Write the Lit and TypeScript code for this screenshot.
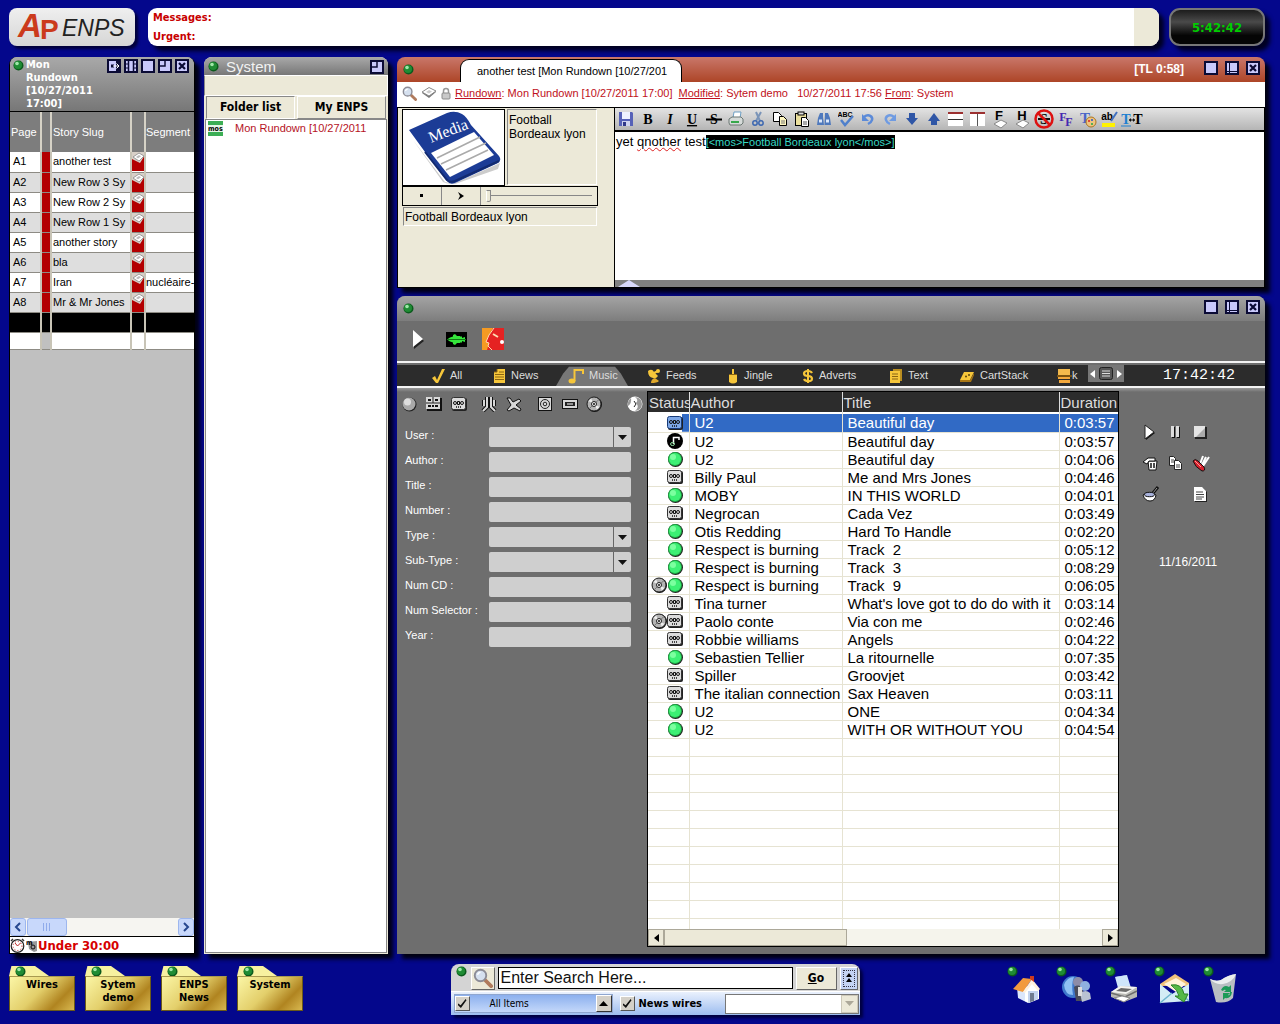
import { LitElement, html, css, svg, nothing, TemplateResult } from "lit";
import { customElement, state } from "lit/decorators.js";
import { classMap } from "lit/directives/class-map.js";

const icon = (w: number, h: number, body: unknown) =>
  html`<svg class="ic" width=${w} height=${h} viewBox="0 0 ${w} ${h}" aria-hidden="true">${body}</svg>`;

const orb = () =>
  icon(11, 11, svg`<circle cx="5.5" cy="5.5" r="5" fill="#0b5a1c"/><circle cx="5" cy="5" r="4" fill="#1f8c34"/><circle cx="4" cy="3.5" r="1.8" fill="#9fe6a8"/>`);

/* Window title-bar glyphs */
const box = (body: unknown) =>
  icon(14, 14, svg`<rect x="1" y="1" width="12" height="12" fill="#c9c9fb" stroke="#0b0b35" stroke-width="2"/>${body}`);
const win = {
  send: () => box(svg`<path d="M9 2h4v10H9z" fill="#0b0b35"/><path d="M4 7h3" stroke="#0b0b35" stroke-width="3"/><path d="M6 7h6M9.500 4.500L12 7 9.500 9.500" stroke="#fff" fill="none"/>`),
  film: () => box(svg`<path d="M4.500 1v12M9.500 1v12" stroke="#0b0b35" stroke-width="1.5"/><path d="M1 5h3M1 9h3M10 5h3M10 9h3" stroke="#0b0b35"/>`),
  full: () => box(nothing),
  corner: () => box(svg`<path d="M7 2v5H2" stroke="#0b0b35" stroke-width="1.5" fill="none"/>`),
  side: () => box(svg`<path d="M4.500 2v10M2 10.500h10" stroke="#0b0b35" fill="none"/>`),
  close: () => box(svg`<path d="M4 4l6 6M10 4l-6 6" stroke="#0b0b35" stroke-width="2.2"/>`),
};

const lens = (n: number) =>
  html`<svg class="ic" width=${n} height=${n} viewBox="0 0 16 16" aria-hidden="true"><path d="M9 9l5.500 5.500" stroke="#b07a5c" stroke-width="3" stroke-linecap="round"/><circle cx="6" cy="6" r="4.6" fill="#d5e0ef" stroke="#8c8c96" stroke-width="1.5"/><path d="M3.600 5.400A3 3 0 0 1 6 3.400" stroke="#fff" stroke-width="1.3" fill="none"/></svg>`;
const layers = () =>
  icon(16, 12, svg`<path d="M1 6l7-5 7 4-7 6z" fill="#777"/><path d="M1 5l7-4.500 7 3.500-7 5z" fill="#fff" stroke="#888"/><path d="M5 5l3-2 3 1.500-3 2z" fill="#ccc"/>`);
const lock = () =>
  icon(10, 13, svg`<path d="M2.500 6V4a2.500 2.500 0 0 1 5 0v2" fill="none" stroke="#999" stroke-width="1.500"/><rect x="1" y="6" width="8" height="6" rx="1" fill="#c9c9c9" stroke="#8a8a8a"/>`);
const caption = () =>
  icon(13, 19, svg`<rect width="13" height="19" fill="#b30000"/><path d="M0 0h13v3L8 11 0 7z" fill="#d8d0c8"/><path d="M1 5l6-4 5 3-5 5z" fill="#fff" stroke="#888" stroke-width=".8"/><path d="M4 5l3-2 2 1.300-3 2z" fill="#bbb"/>`);

/* Status column glyphs */
const ball = () =>
  icon(16, 16, svg`<circle cx="8.500" cy="8.500" r="7.500" fill="#222"/><circle cx="8" cy="8" r="7" fill="#1faa45"/><circle cx="8" cy="8" r="6" fill="#3df074"/><circle cx="6" cy="6" r="3" fill="#7cff9f"/>`);
const tape = (blue = false) =>
  icon(16, 14, svg`<rect x="1" y="1" width="15" height="13" rx="2" fill="#222"/><rect x=".5" y=".5" width="14" height="12" rx="2" fill=${blue ? "#7da7e6" : "#dcdcdc"} stroke=${blue ? "#173a78" : "#333"}/><circle cx="4" cy="6" r="1.500" fill="none" stroke="#111"/><circle cx="11" cy="6" r="1.500" fill="none" stroke="#111"/><path d="M6.500 4.500h2v3h-2z" fill="none" stroke="#111"/><path d="M5 10h1M7 10h1M9 10h1" stroke="#111" stroke-width="1.500"/>`);
const note = () =>
  icon(16, 16, svg`<circle cx="8" cy="8" r="8" fill="#000"/><path d="M6.500 11V4.500H12V7" fill="none" stroke="#fff" stroke-width="1.500"/><ellipse cx="5.500" cy="11" rx="2" ry="1.500" fill="none" stroke="#8fe0a0"/>`);
const disc = () =>
  icon(16, 16, svg`<circle cx="8.500" cy="8.500" r="7.500" fill="#111"/><circle cx="8" cy="8" r="7" fill="#b4b4b4" stroke="#222"/><path d="M8 8L2.500 5 5 2.500zM8 8l5.500 3-2.500 2.500z" fill="#eee"/><path d="M8 8l5-4.500M8 8l-5 5" stroke="#777"/><circle cx="8" cy="8" r="2.500" fill="#eee" stroke="#222"/><circle cx="8" cy="8" r="1" fill="#111"/>`);

/* Editor toolbar */
const letter = (t: string, style: string) => svg`<text x="8" y="13" text-anchor="middle" class=${style}>${t}</text>`;
const tools: [string, TemplateResult][] = [
  ["Save", icon(16, 16, svg`<path d="M1 1h13l1 1v13H1z" fill="#5661b8"/><rect x="4" y="1" width="8" height="7" fill="#eef2ff"/><rect x="4" y="10" width="8" height="5" fill="#cfd3ef"/><rect x="5" y="11" width="3" height="4" fill="#30388a"/>`)],
  ["Bold", icon(16, 16, letter("B", "tb"))],
  ["Italic", icon(16, 16, letter("I", "ti"))],
  ["Underline", icon(16, 16, letter("U", "tu"))],
  ["Strike", icon(16, 16, svg`${letter("S", "tb")}<path d="M0 8.500h16" stroke="#000" stroke-width="2"/>`)],
  ["Print", icon(16, 16, svg`<path d="M5 7l1-6h7l-1 6z" fill="#fff" stroke="#6d9fc4"/><path d="M1 8l3-2h9l2 2v4l-2 2H2l-1-2z" fill="#d6dbd9" stroke="#6b7773"/><path d="M3 11h8" stroke="#37a84b" stroke-width="2"/>`)],
  ["Cut", icon(16, 16, svg`<path d="M6 1l4 9M11 1L6 10" stroke="#7a94b8" stroke-width="2"/><circle cx="5" cy="12" r="2.200" fill="none" stroke="#3c67b0" stroke-width="1.500"/><circle cx="11" cy="12" r="2.200" fill="none" stroke="#3c67b0" stroke-width="1.500"/>`)],
  ["Copy", icon(16, 16, svg`<path d="M1.500 1.500h5l3 3v6h-8z" fill="#fff" stroke="#000"/><path d="M7.500 5.500h4l3 3v6h-7z" fill="#fdf6c0" stroke="#000"/><path d="M9 10h4M9 12h4" stroke="#777"/>`)],
  ["Paste", icon(16, 16, svg`<rect x="1.500" y="2.500" width="11" height="12" fill="#eadf9d" stroke="#000"/><rect x="4" y="1" width="6" height="3" fill="#ddd" stroke="#000"/><path d="M7.500 6.500h4l3 3v6h-7z" fill="#fff" stroke="#000"/><path d="M9 11h4M9 13h4" stroke="#555"/>`)],
  ["Find", icon(16, 16, svg`<path d="M4 2h3v4l1 8H1l1-7zM9 2h3l2 5 1 7H8.500z" fill="#4f79bd"/><path d="M3 10h3M10 10h3" stroke="#dce8fa" stroke-width="3"/>`)],
  ["Spelling", icon(16, 16, svg`<text x="7" y="6" text-anchor="middle" class="tabc">ABC</text><path d="M3 9l4 5 8-9" fill="none" stroke="#4f80cc" stroke-width="2.500"/>`)],
  ["Undo", icon(16, 16, svg`<path d="M4 6c5-4 9 0 8 3-.5 2-2 3-4 4" fill="none" stroke="#5b8ad8" stroke-width="2.500"/><path d="M2 3v7h7z" fill="#5b8ad8"/>`)],
  ["Redo", icon(16, 16, svg`<path d="M12 6c-5-4-9 0-8 3 .5 2 2 3 4 4" fill="none" stroke="#6f9be2" stroke-width="2.500"/><path d="M14 3v7H7z" fill="#6f9be2"/>`)],
  ["Move down", icon(16, 16, svg`<path d="M5 2h6v5h3l-6 7-6-7h3z" fill="#2f56a6"/>`)],
  ["Move up", icon(16, 16, svg`<path d="M8 2l6 8h-3v4H5v-4H2z" fill="#2f56a6"/>`)],
  ["Rows", icon(16, 16, svg`<rect width="15" height="14" y="1" fill="#fff"/><path d="M0 2h15" stroke="#9c3030" stroke-width="2"/><path d="M0 8.500h15" stroke="#333"/>`)],
  ["Columns", icon(16, 16, svg`<rect width="15" height="14" y="1" fill="#fff"/><path d="M0 2h15" stroke="#9c3030" stroke-width="2"/><path d="M7.500 3v12" stroke="#555"/>`)],
  ["Footer", icon(18, 20, svg`<path d="M3 15l7-4 6 3-6 5z" fill="#fff" stroke="#888"/><text x="8" y="11" text-anchor="middle" class="tcap">F</text>`)],
  ["Header", icon(18, 20, svg`<path d="M3 15l7-4 6 3-6 5z" fill="#fff" stroke="#888"/><text x="9" y="11" text-anchor="middle" class="tcap">H</text>`)],
  ["Clear", icon(20, 20, svg`<text x="10" y="15" text-anchor="middle" class="tb">S</text><path d="M4 10h12" stroke="#111" stroke-width="2"/><circle cx="10" cy="10" r="8.500" fill="none" stroke="#d11" stroke-width="2.500"/><path d="M4 4l12 12" stroke="#d11" stroke-width="2.500"/>`)],
  ["Font", icon(16, 18, svg`<text x="5" y="11" text-anchor="middle" class="tf1">F</text><text x="11" y="16" text-anchor="middle" class="tf1">F</text>`)],
  ["Colour", icon(18, 18, svg`<text x="6" y="13" text-anchor="middle" class="tf2">T</text><circle cx="12" cy="12" r="5" fill="#eec37f" stroke="#a97522"/><circle cx="10" cy="11" r="1" fill="#d22"/><circle cx="13" cy="10" r="1" fill="#25c"/><circle cx="13" cy="14" r="1" fill="#2a4"/>`)],
  ["Highlight", icon(18, 18, svg`<rect x="1" y="13" width="13" height="4" fill="#fff200"/><text x="6" y="10" text-anchor="middle" class="tab2">ab</text><path d="M16 2l-6 9" stroke="#4170c0" stroke-width="2"/>`)],
  ["Spacing", icon(22, 18, svg`<text x="5" y="14" text-anchor="middle" class="tt1">T</text><text x="17" y="14" text-anchor="middle" class="tt2">T</text><path d="M8 10h6" stroke="#111"/><path d="M10 8L8 10l2 2zM12 8l2 2-2 2z" fill="#111"/><path d="M0 16h10" stroke="#2080d0"/>`)],
];

/* Category tab glyphs */
const Y = "#f6c63a";
const cats: [string, TemplateResult][] = [
  ["All", icon(14, 16, svg`<path d="M1 10l3-2 2 4 5-11 3 0-7 14H5z" fill=${Y}/>`)],
  ["News", icon(14, 16, svg`<path d="M5 1h8v14H2V4h3z" fill=${Y}/><path d="M5 1v3H2" fill="none" stroke="#8a6512"/><path d="M7 4h5M3 6.500h9M3 9h9M3 11.500h9" stroke="#8a6512"/>`)],
  ["Music", icon(16, 16, svg`<path d="M6.500 13V2H15v4" fill="none" stroke=${Y} stroke-width="2"/><ellipse cx="4" cy="13" rx="3.500" ry="2.500" fill=${Y}/>`)],
  ["Feeds", icon(14, 16, svg`<path d="M1 3q4-3 6 1l4 4q-2 3-5 2-5-1-5-7z" fill=${Y}/><path d="M7 5l4-2" stroke=${Y} stroke-width="2"/><circle cx="11" cy="3" r="2" fill=${Y}/><path d="M4 15q0-4 4-5l4 3q-2 2-8 2z" fill="#e0a82a"/>`)],
  ["Jingle", icon(12, 16, svg`<path d="M2 6h8v8q-4 3-8 0z" fill=${Y}/><path d="M6 6V1" stroke=${Y} stroke-width="2"/><path d="M2 6.500h8" stroke="#8a6512"/>`)],
  ["Adverts", icon(12, 16, svg`<path d="M6 1v14" stroke=${Y} stroke-width="2"/><path d="M10 5Q9 3 6 3 2 3 2 5.500T6 8t4 2.700T6 13Q3 13 2 11" fill="none" stroke=${Y} stroke-width="2.200"/>`)],
  ["Text", icon(14, 16, svg`<path d="M4 1h9v12H4z" fill="#b98d20"/><path d="M1 3h10v12H1z" fill=${Y}/><path d="M3 6h6M3 8.500h6M3 11h6" stroke="#8a6512"/>`)],
  ["CartStack", icon(16, 14, svg`<path d="M5 3h10l-4 8H1z" fill=${Y}/><path d="M1 11h10l4-7v2l-3 7H1z" fill="#a87614"/><circle cx="10" cy="6" r="1" fill="#5d4408"/><circle cx="7" cy="7.500" r="1" fill="#5d4408"/>`)],
  ["k", icon(16, 16, svg`<rect x="2" y="1" width="12" height="6" fill="#f3b94c"/><rect x="1" y="7" width="15" height="2" fill="#7a5210"/><path d="M2 9h12v2H2zM3 12h11v3H3z" fill="#f3a83c"/>`)],
];

const g = "#d8d8d8";
const filters: [string, string, TemplateResult][] = [
  ["Any", "a", icon(16, 16, svg`<circle cx="8.500" cy="8.500" r="7" fill="#222"/><circle cx="8" cy="8" r="6.500" fill="#a9a9a9"/><circle cx="6.500" cy="6" r="3.500" fill="#dedede"/>`)],
  ["Multi tape", "a", icon(16, 14, svg`<rect x="1" y="1" width="15" height="13" fill="#111"/><rect width="14" height="12" fill=${g}/><path d="M0 6h14M7 0v6" stroke="#222"/><path d="M2 3h3M9 3h3M2 9h3M6 9h2M9 9h3" stroke="#111" stroke-width="2"/>`)],
  ["Tape", "b", tape()],
  ["Compare", "a", icon(16, 16, svg`<path d="M6 1v10l-4 4M10 1v10l4 4M3 4v6M13 4v6" stroke="#111" stroke-width="4" fill="none"/><path d="M6 1v10l-4 4M10 1v10l4 4M3 4v6M13 4v6" stroke=${g} stroke-width="2" fill="none"/>`)],
  ["Plane", "b", icon(16, 16, svg`<path d="M1 2l3 0 3 4 6-3 2 2-5 4 5 4-1 2-6-3-5 3-2-1 4-5z" fill=${g} stroke="#111"/>`)],
  ["Speaker", "a", icon(16, 16, svg`<rect x="1.500" y="1.500" width="13" height="13" fill=${g} stroke="#111"/><circle cx="8" cy="8" r="4.500" fill="none" stroke="#222"/><circle cx="8" cy="8" r="1.800" fill="none" stroke="#222"/>`)],
  ["Cartridge", "a", icon(16, 12, svg`<rect x=".5" y="1.500" width="15" height="9" fill=${g} stroke="#111"/><rect x="3" y="4" width="10" height="4" fill="#222"/><path d="M5 6h6" stroke="#fff"/>`)],
  ["Disc", "c", disc()],
  ["Contrast", "a", icon(16, 16, svg`<circle cx="8" cy="8" r="7.500" fill="#fff"/><path d="M8 1q4 3 1 6 4 4-1 8 7-1 7-7T8 1zM4 2Q0 5 1 10q4-3 3-8z" fill="#999"/><path d="M7 5l2 3-2 3" stroke="#222" fill="none"/>`)],
];

const fields: [string, boolean][] = [
  ["User :", true], ["Author :", false], ["Title :", false], ["Number :", false], ["Type :", true],
  ["Sub-Type :", true], ["Num CD :", false], ["Num Selector :", false], ["Year :", false],
];

const tracks: [string, string, string, string][] = [
  ["s", "U2", "Beautiful day", "0:03:57"],
  ["n", "U2", "Beautiful day", "0:03:57"],
  ["b", "U2", "Beautiful day", "0:04:06"],
  ["t", "Billy Paul", "Me and Mrs Jones", "0:04:46"],
  ["b", "MOBY", "IN THIS WORLD", "0:04:01"],
  ["t", "Negrocan", "Cada Vez", "0:03:49"],
  ["b", "Otis Redding", "Hard To Handle", "0:02:20"],
  ["b", "Respect is burning", "Track  2", "0:05:12"],
  ["b", "Respect is burning", "Track  3", "0:08:29"],
  ["db", "Respect is burning", "Track  9", "0:06:05"],
  ["t", "Tina turner", "What's love got to do do with it", "0:03:14"],
  ["dt", "Paolo conte", "Via con me", "0:02:46"],
  ["t", "Robbie williams", "Angels", "0:04:22"],
  ["b", "Sebastien Tellier", "La ritournelle", "0:07:35"],
  ["t", "Spiller", "Groovjet", "0:03:42"],
  ["t", "The italian connection", "Sax Heaven", "0:03:11"],
  ["b", "U2", "ONE", "0:04:34"],
  ["b", "U2", "WITH OR WITHOUT YOU", "0:04:54"],
];
const glyphs: Record<string, () => TemplateResult> = { s: () => tape(true), n: note, b: ball, t: () => tape(), d: disc };

const stories: [string, string, string][] = [
  ["A1", "another test", ""], ["A2", "New Row 3 Sy", ""], ["A3", "New Row 2 Sy", ""], ["A4", "New Row 1 Sy", ""],
  ["A5", "another story", ""], ["A6", "bla", ""], ["A7", "Iran", "nucléaire-"], ["A8", "Mr & Mr Jones", ""],
];

const transport: [string, TemplateResult | null][] = [
  ["Play", icon(16, 16, svg`<path d="M4 2l9 7-9 7z" fill="#111"/><path d="M3 1l9 7-9 7z" fill="#fff" stroke="#222"/>`)],
  ["Pause", icon(16, 16, svg`<path d="M5 3h3v11H5zM10 3h3v11h-3z" fill="#111"/><path d="M4 2h3v11H4zM9 2h3v11H9z" fill="#ddd"/>`)],
  ["Stop", icon(16, 16, svg`<rect x="3" y="3" width="12" height="12" fill="#222"/><rect x="2" y="2" width="11" height="11" fill="#e4e4e4"/><path d="M13 4v9H4z" fill="#aaa"/>`)],
  ["Delete", icon(16, 16, svg`<path d="M6 6h9l-1 9H7z" fill="#fff" stroke="#111"/><path d="M9 8v5M12 8v5" stroke="#111" stroke-width="1.500"/><path d="M1 7l5-4h7v3H7L5 9z" fill="#fff" stroke="#111"/>`)],
  ["Duplicate", icon(16, 16, svg`<path d="M2.500 1.500h4l2 2v7h-6z" fill="#fff" stroke="#222"/><path d="M7.500 5.500h4l3 3v6h-7z" fill="#fff" stroke="#222"/><path d="M4 5h3M4 7h3M9 10h4M9 12h4" stroke="#444"/>`)],
  ["Tools", icon(18, 17, svg`<path d="M8 9l3-8M10 10l4-8M11 11l6-9" stroke="#fff" stroke-width="2"/><path d="M1 6q2-3 5 0l6 6q2 4-2 4Q3 12 1 6z" fill="#d8202c" stroke="#111"/><path d="M3 6l6 6" stroke="#ff9a9a"/>`)],
  ["Pot", icon(18, 16, svg`<path d="M11 7l5-6" stroke="#111" stroke-width="3"/><path d="M11 7l4-5" stroke="#999"/><path d="M1 9q6-5 13 0-1 6-6 6T1 9z" fill="#fff" stroke="#111"/><ellipse cx="7.500" cy="8.500" rx="5" ry="2.200" fill="#a8b2dc" stroke="#111"/>`)],
  ["", null],
  ["Notes", icon(16, 16, svg`<path d="M3 2h8l4 4v10H3z" fill="#222"/><path d="M2 1h8l4 4v10H2z" fill="#fff"/><path d="M4 6h7M4 8.500h8M4 11h8M4 13h6" stroke="#444"/>`)],
];

const desk: [string, TemplateResult][] = [
  ["Home", icon(30, 30, svg`<path d="M5 14l6-4 5 5v15L6 25z" fill="#dbe6fb"/><path d="M13 17l7-8 7 8v9l-10 4-4-2z" fill="#fff"/><path d="M16 18l10 0v8l-10 4z" fill="#c3d3ef"/><path d="M1 16L11 5l9 1-9 13z" fill="#f29a3d"/><path d="M11 19L20 6l8 10-2 2-6-7-7 9z" fill="#fff1de"/><path d="M18 3h4v6l-4-3z" fill="#cc3a20"/><path d="M18 20h4v8l-4 1z" fill="#6f7b90"/>`)],
  ["People", icon(32, 30, svg`<circle cx="12" cy="14" r="11" fill="#3f78cc"/><path d="M3 12q3-8 10-8-3 7-1 18-8 0-9-10z" fill="#8fc0f3"/><circle cx="17" cy="9" r="5" fill="#8c8ca8"/><path d="M13 14q6-4 9 3v11h-7z" fill="#4a4c5a"/><circle cx="24" cy="13" r="5" fill="#8fb0df"/><path d="M19 20q6-4 10 0l1 6-9 3z" fill="#b9c2d2"/><path d="M17 14h4v9h-4z" fill="#ddd"/>`)],
  ["Printer", icon(30, 30, svg`<path d="M8 15L5 4q3-1 6-1 3-1 6-1l4 13z" fill="#cfe6fb"/><path d="M1 19l9-6 17 1v10l-13 5-13-5z" fill="#b9b9b4"/><path d="M1 19l9-6 17 1-11 7z" fill="#f4f4f1"/><path d="M6 18l5-3 11 1-6 3z" fill="#6a6a6a"/><path d="M1 20l14 4 12-6" fill="none" stroke="#6d6d6d" stroke-width="1.500"/><path d="M4 25l8-2 8 2-6 4z" fill="#fff" stroke="#888"/>`)],
  ["Mail", icon(32, 32, svg`<path d="M1 11L16 1l14 9v3H1z" fill="#f0c27c"/><path d="M5 11L17 5l10 6-10 8z" fill="#fff3dc"/><path d="M1 11l12 10L30 11v17L1 30z" fill="#d3ecf5"/><path d="M1 30l12-10M30 28L19 18" stroke="#6db5cf" stroke-width="1.500"/><path d="M12 12q11-2 13 9h4l-4 8-9-6h4q-1-6-8-11z" fill="#55b947" stroke="#2b8428"/>`)],
  ["Recycle bin", icon(32, 32, svg`<path d="M2 6q6 3 11 1 7-5 15-6l-3 24q-6 6-17 4z" fill="#b9bec2"/><path d="M2 6q6 3 11 1 7-5 15-6-3 8-13 10-8 1-13-5z" fill="#eceeef"/><path d="M13 17q3-6 8-3l2-2v7h-7l2-2q-2-1-3 1zM24 19q-1 7-7 6l-2 2v-7h7l-2 2q2 1 2-3z" fill="#1d9a58"/>`)],
];

@customElement("app-root")
export class AppRoot extends LitElement {
  @state() private selected = 0;
  @state() private category = "Music";

  static styles = css`
    :host { display: block; font-family: "Liberation Sans", Arial, sans-serif; font-size: 11px; line-height: 13px; color: #000; }
    * { box-sizing: border-box; }
    button { font: inherit; color: inherit; background: none; border: 0; padding: 0; margin: 0; cursor: pointer; }
    input, select { font: inherit; margin: 0; border-radius: 0; }
    .ic { display: block; flex: none; }
    .bold { font-family: "DejaVu Sans Condensed", "DejaVu Sans", sans-serif; font-weight: bold; }
    .page { min-height: 100vh; display: flex; flex-direction: column; padding: 8px 15px 0 9px; background: #04078c; }
    .grow { flex: 1; min-width: 0; }

    .top { display: flex; gap: 10px; height: 38px; margin-bottom: 11px; }
    .logo { width: 126px; margin-right: 3px; border-radius: 8px; background: linear-gradient(#efefef, #d6d6d6); box-shadow: 3px 3px 3px #00003a; }
    .logo .ap { font: bold 28px "Liberation Sans", sans-serif; fill: #cb3a1c; }
    .logo .big { font-size: 33px; font-style: italic; }
    .logo .enps { font: italic 23px "Liberation Sans", sans-serif; fill: #222; }
    .messages { flex: 1; display: flex; background: #fff; border-radius: 9px; overflow: hidden; color: #c80000; }
    .shadow { box-shadow: 5px 5px 4px #000022; }
    .messages dl { flex: 1; margin: 0; padding: 0 5px; line-height: 19px; }
    .messages dt { margin: 0; }
    .messages i { width: 25px; background: #ece9d8; }
    .clock { width: 96px; border: 2px solid #777; border-radius: 11px; background: linear-gradient(#1c1c1c, #4a4a4a 35%, #050505 75%); color: #0c0; font-size: 13px; display: grid; place-items: center; }

    .main { flex: 1; display: grid; grid-template-columns: 186px 184px minmax(0, 1fr); gap: 9px; }
    .win { display: flex; flex-direction: column; min-width: 0; border-radius: 8px 8px 0 0; box-shadow: 5px 5px 4px #000011; overflow: hidden; }
    .bar { display: flex; align-items: flex-start; background: linear-gradient(#a9a9a9, #777); color: #fff; }
    .controls { display: flex; align-items: flex-start; gap: 3px; }
    .controls.wide { gap: 7px; }
    .right { display: flex; flex-direction: column; gap: 8px; min-width: 0; }

    .rundown { background: #c0c0c0; border: 1px solid #000; border-top: 0; }
    .rundown .bar { height: 55px; padding: 1px 5px 0 3px; gap: 2px; border-bottom: 1px solid #000; }
    .rundown .bar > .ic { margin-top: 2px; }
    .rundown h1 { margin: 0; font-size: 11px; line-height: 13px; }
    .rundown .controls { margin-top: 1px; }
    .grid { width: 100%; table-layout: fixed; border-collapse: collapse; }
    .grid th { height: 40px; background: #7d7d7d; color: #fff; font-weight: normal; text-align: left; padding: 0 1px; border-right: 2px solid #d6d2c6; white-space: nowrap; overflow: hidden; }
    .grid td { height: 20px; padding: 0 1px; border-right: 2px solid #c8c4b6; border-bottom: 1px solid #8d8b84; white-space: nowrap; overflow: hidden; background: #fff; }
    .grid td:first-child { padding-left: 3px; }
    .grid th:last-child, .grid td:last-child { border-right: 0; }
    .grid td:last-child, .grid th:last-child { padding: 0; }
    .grid tr.alt td { background: #dedede; }
    .grid tr td.cue, .grid tr.alt td.cue { background: #b30000; }
    .grid td.cap { padding: 0; }
    .grid tr.end td { background: #000; }
    .grid tr.last td { height: 17px; }
    .grid tr.last td.cue { background: #c0c0c0; }
    .xp { display: flex; height: 18px; background: #f6f5f1; }
    .xp .btn { width: 16px; border: 1px solid #9db6ee; border-radius: 3px; background: #c8d8fb; display: grid; place-items: center; }
    .xp .thumb { width: 40px; margin-left: 1px; }
    .xp .sp { flex: 1; }
    .under { height: 17px; border-top: 1px solid #000; background: #fff; color: #d60000; display: flex; align-items: center; font-size: 13px; gap: 1px; }

    .system { background: #ece9d8; }
    .system .bar { height: 18px; padding: 1px 4px 0 4px; gap: 5px; align-items: center; }
    .system h2 { margin: 0; font-weight: normal; font-size: 15px; line-height: 15px; padding-left: 2px; color: #f2f2f2; }
    .blank { height: 21px; border: 1px solid #fff; border-left-color: #888; }
    .tabs2 { display: grid; grid-template-columns: 1fr 1fr; gap: 2px; height: 23px; padding: 0 2px; }
    .tabs2 button { border: 1px solid; border-color: #fff #888 #888 #fff; font-size: 12px; }
    .tabs2 button.on { border-color: #888 #fff #fff #888; }
    .tree { flex: 1; margin: 0 1px 1px; padding: 1px 0 0 2px; background: #fff; border: 1px solid #888; color: #b5121e; }
    .tree a { display: flex; align-items: center; gap: 12px; color: inherit; text-decoration: none; }
    .mos { font: bold 7px "DejaVu Sans Condensed", sans-serif; }

    .story .bar { height: 25px; background: linear-gradient(#c9776a, #ad4527); padding: 2px 5px 0 6px; align-items: stretch; }
    .story .bar > .ic { margin-top: 5px; }
    .doc { width: 222px; margin-left: 46px; border: 1px solid #000; border-bottom: 0; border-radius: 9px 9px 0 0; background: #fff; color: #000; text-align: left; padding: 1px 16px 0; white-space: nowrap; }
    .tl { font-weight: bold; font-size: 12px; padding: 4px 20px 0 0; }
    .story .controls, .music .controls { margin-top: 2px; }
    .info { height: 25px; display: flex; align-items: center; gap: 4px; padding: 0 5px 3px; background: #fff; color: #c01020; white-space: nowrap; }
    .info a { color: inherit; }
    .info p { margin: 0; padding-right: 2px; }
    .edit { display: flex; min-height: 181px; border: 1px solid #000; background: #ece9d8; }
    .media { width: 216px; padding: 1px 0 0 4px; font-size: 12px; line-height: 14px; }
    .mtop { display: flex; gap: 2px; }
    .card { width: 103px; height: 77px; background: #fff; border: 1px solid #000; }
    .card text { font: 16px "Liberation Serif", serif; fill: #fff; }
    .inset { border: 1px solid; border-color: #888 #fff #fff #888; padding: 3px 1px; }
    .mtop .inset { width: 90px; height: 76px; }
    .mbar { display: flex; width: 196px; height: 20px; border: 1px solid #000; }
    .mbar button { width: 39px; border-right: 1px solid #888; display: grid; place-items: center; }
    .mbar input { appearance: none; flex: 1; min-width: 0; margin: 0 5px; height: 18px; background: linear-gradient(#888, #888) 0 8px / 100% 1px no-repeat; }
    .mbar input::-webkit-slider-thumb { appearance: none; width: 5px; height: 12px; background: #ece9d8; border: 1px solid #888; border-left-color: #fff; border-radius: 0 0 3px 3px; }
    .name { width: 194px; height: 19px; margin: 1px; padding: 2px 1px; }
    .editor { flex: 1; min-width: 0; display: flex; flex-direction: column; background: #fff; border-left: 1px solid #000; }
    .tools { display: flex; height: 24px; background: linear-gradient(#e3e3e3, #b5b5b5); border-bottom: 2px solid #000; overflow: hidden; }
    .tools button { width: 22px; flex: none; display: grid; place-items: center; }
    .tb { font: bold 14px "Liberation Serif", serif; }
    .ti { font: italic bold 14px "Liberation Serif", serif; }
    .tu { font: bold 14px "Liberation Serif", serif; text-decoration: underline; }
    .tabc { font: bold 7px "Liberation Sans", sans-serif; }
    .tcap { font: bold 13px "Liberation Sans", sans-serif; }
    .tf1 { font: bold 12px "Liberation Serif", serif; fill: #4428b0; }
    .tf2 { font: bold 15px "Liberation Serif", serif; fill: #4a66c8; }
    .tab2 { font: bold 10px "Liberation Sans", sans-serif; }
    .tt1 { font: bold 14px "Liberation Serif", serif; fill: #2080d0; }
    .tt2 { font: bold 14px "Liberation Serif", serif; }
    .text { flex: 1; padding: 2px 1px; font-size: 13px; line-height: 15px; outline: 0; }
    .text u { text-decoration: underline wavy #d22 1px; }
    .text mark { background: #000; color: #38d8c4; font-size: 11px; padding: 1px 0; }
    .grip { height: 7px; background: #808080; padding-left: 3px; }

    .music { flex: 1; background: #6e6e6e; }
    .music .bar { height: 25px; padding: 2px 5px 0 6px; background: linear-gradient(#a4a4a4, #7d7d7d); }
    .music .bar > .ic { margin-top: 5px; }
    .launch { display: flex; align-items: center; gap: 21px; height: 40px; padding: 0 0 4px 14px; }
    .launch button:last-child { margin-left: -6px; }
    .cats { display: flex; align-items: stretch; height: 27px; border: solid #f4f4f4; border-width: 2px 0; background: #2c2c2c; color: #ddd; box-shadow: inset 0 2px #6e6e6e; padding: 2px 30px 0 34px; }
    .catlist { display: grid; grid-template-columns: 61px 64px 91px 80px 75px 87px 70px 97px 28px; }
    .catlist button { display: flex; align-items: center; gap: 5px; white-space: nowrap; overflow: hidden; }
    .catlist button:last-child { gap: 0; }
    .catlist .on { width: 72px; padding-left: 12px; background: #777; clip-path: polygon(0 100%, 10% 40%, 18% 8%, 82% 8%, 90% 40%, 100% 100%); }
    .pager { display: flex; align-items: center; justify-content: space-between; width: 36px; height: 17px; margin-left: 4px; padding: 0 2px; background: #777; }
    .pager button { display: block; }
    .lcd { margin-left: auto; align-self: center; font: 15px "Liberation Mono", monospace; color: #fff; }
    .body { flex: 1; display: flex; min-height: 560px; padding: 3px 0 7px; background: linear-gradient(#999, #6e6e6e 4px); }
    .side { width: 250px; color: #fff; padding: 5px 4px 0 4px; }
    .kinds { display: flex; justify-content: space-between; height: 16px; align-items: center; margin-bottom: 15px; }
    .kinds button.c { margin-right: 16px; }
    .kinds button.b { margin-right: 6px; }
    .side form { display: grid; gap: 5px; }
    .field { display: grid; grid-template-columns: 84px 142px; padding-left: 4px; align-items: center; height: 20px; }
    .field label { padding-bottom: 3px; }
    .field > input, .pick select { width: 100%; height: 20px; border: 0; border-radius: 2px; background: #cfcfcf; padding: 0 4px; }
    .pick { display: grid; }
    .pick > * { grid-area: 1 / 1; }
    .pick select { appearance: none; }
    .pick span { justify-self: end; width: 18px; height: 20px; border-left: 1px solid #666; display: grid; place-items: center; pointer-events: none; }
    .list { flex: 1; display: flex; flex-direction: column; min-width: 0; border: 1px solid #000; background: #fff; }
    .rows { flex: 1 1 0; min-height: 0; overflow: hidden; }
    .rows table { width: 100%; table-layout: fixed; border-collapse: collapse; font-size: 15px; line-height: 17px; }
    .rows th { height: 20px; padding: 0 1px; background: #2c2c2c; color: #ddd; font-weight: normal; text-align: left; border-right: 1px solid #ddd; overflow: hidden; white-space: nowrap; }
    .rows tr.gap td { height: 2px; border-bottom: 0; }
    .rows td { height: 18px; padding: 0 5px; border-right: 1px solid #e6e3d2; border-bottom: 1px solid #e6e3d2; white-space: pre; overflow: hidden; }
    .rows th:last-child, .rows td:last-child { border-right: 0; }
    .rows td.st { padding: 0 6px 0 0; }
    .st div { display: flex; justify-content: flex-end; align-items: center; height: 17px; }
    .rows tr.sel td { background: #316ac5; color: #fff; }
    .rows tr.sel td.st { background: linear-gradient(#316ac5, #316ac5) right / 7px 100% no-repeat; }
    .hs { display: flex; height: 17px; background: #f5f4ec; }
    .hs button { width: 16px; background: #ece9d8; border: 1px solid #aca899; display: grid; place-items: center; }
    .hs .thumb { width: 183px; background: #ece9d8; border: 1px solid #aca899; }
    .hs .thumb + span { flex: 1; }
    .deck { width: 146px; padding: 33px 0 0 23px; color: #fff; font-size: 12px; }
    .deck .keys { display: grid; grid-template-columns: repeat(3, 25px); grid-auto-rows: 31px; }
    .deck button { width: 18px; height: 16px; }
    .deck p { margin: 38px 0 0; padding-left: 17px; line-height: 14px; }

    .foot { height: 70px; display: flex; justify-content: space-between; align-items: flex-start; padding: 10px 13px 0 0; }
    .folders { display: flex; gap: 10px; padding-top: 2px; }
    .folders button { display: flex; flex-direction: column; width: 66px; }
    .flap { display: block; width: 40px; height: 10px; padding-left: 6px; background: #f7f1a0; clip-path: polygon(6% 0, 65% 0, 100% 100%, 0 100%); }
    .folder { width: 100%; height: 35px; padding-top: 1px; border: 1px solid #6b5a18; border-top-color: #a89a50; background: linear-gradient(135deg, #fbf6a6, #e3cf6b 45%, #b08420 75%, #d8b850); white-space: pre-line; font-size: 11px; text-align: center; }
    .search { width: 409px; height: 51px; border-radius: 8px 8px 0 0; overflow: hidden; background: #d4d4d4; box-shadow: 3px 3px 3px #000040; }
    .s1 { display: flex; align-items: center; height: 27px; padding: 2px 2px 1px 5px; gap: 3px; }
    .s1 > .ic { align-self: flex-start; margin-right: 1px; }
    .s1 button { height: 23px; display: grid; place-items: center; background: #ece9d8; border: 1px solid; border-color: #fff #666 #666 #fff; }
    .s1 .find { width: 24px; }
    .s1 .go { width: 41px; font-size: 12px; display: block; }
    .s1 .more { width: 18px; background: #c4d4f4; outline: 1px dotted #334; outline-offset: -4px; }
    .s1 input { flex: 1; min-width: 0; height: 22px; border: 1px solid #000; padding: 0 2px; font-size: 16px; color: #222; }
    .s1 input::placeholder { color: #111; opacity: 1; }
    .s2 { display: flex; align-items: center; height: 24px; border-top: 1px solid #fff; background: linear-gradient(#eaf1fd, #9dbdf0); padding: 0 1px 0 3px; gap: 6px; }
    .all { display: flex; align-items: center; width: 159px; height: 19px; border: 1px solid #8fa6cf; background: linear-gradient(#8cb0ee, #c4d8fa); }
    .all label { flex: 1; padding-left: 20px; font-family: "DejaVu Sans Condensed", sans-serif; font-size: 10px; }
    .all button { width: 16px; height: 17px; background: #d4d0c8; border: 1px solid; border-color: #fff #333 #333 #fff; display: grid; place-items: center; }
    .s2 input { appearance: none; flex: none; width: 15px; height: 15px; background: #d4d0c8; border: 1px solid; border-color: #fff #555 #555 #fff; display: grid; place-items: center; }
    .s2 input:checked::before { content: ""; width: 9px; height: 9px; background: #111; clip-path: polygon(0 45%, 35% 70%, 90% 0, 100% 15%, 38% 100%, 0 65%); }
    .wires { display: flex; align-items: center; gap: 4px; margin-left: 1px; font-size: 11px; width: 98px; white-space: nowrap; }
    .s2 .pick { margin-left: auto; width: 134px; }
    .s2 .pick select { border: 1px solid #777; background: #fff; border-radius: 0; }
    .s2 .pick span { width: 17px; height: 18px; margin: 1px; border: 1px solid #ccc8b8; background: #ece9d8; }
    .desk { display: grid; grid-template-columns: repeat(5, 49px); padding-top: 2px; }
    .desk button { display: grid; justify-items: start; width: 42px; }
    .desk button > * { grid-area: 1 / 1; }
    .desk button .ic:last-child { margin: 7px 0 0 5px; }
  `;

  private ctl(names: (keyof typeof win)[], wide = false) {
    return html`<div class=${classMap({ controls: true, wide })}>
      ${names.map((n) => html`<button aria-label=${n}>${win[n]()}</button>`)}
    </div>`;
  }

  private arrow(color = "#111") {
    return icon(9, 5, svg`<path d="M0 0h9L4.500 5z" fill=${color}/>`);
  }

  private rundown() {
    return html`<section class="win rundown">
      <header class="bar">${orb()}
        <h1 class="bold grow">Mon<br>Rundown<br>[10/27/2011<br>17:00]</h1>
        ${this.ctl(["send", "film", "full", "corner", "close"])}
      </header>
      <table class="grid">
        <colgroup><col style="width:31px"><col style="width:10px"><col style="width:80px"><col style="width:14px"><col></colgroup>
        <thead><tr><th>Page</th><th></th><th>Story Slug</th><th></th><th>Segment</th></tr></thead>
        <tbody>
          ${stories.map(([page, slug, seg], i) => html`<tr class=${i % 2 ? "alt" : ""}>
            <td>${page}</td><td class="cue"></td><td>${slug}</td><td class="cap">${caption()}</td><td>${seg}</td></tr>`)}
          <tr class="end"><td></td><td></td><td></td><td></td><td></td></tr>
          <tr class="last"><td></td><td class="cue"></td><td></td><td></td><td></td></tr>
        </tbody>
      </table>
      <div class="grow"></div>
      <div class="xp">
        <button class="btn" aria-label="Scroll left">${icon(8, 10, svg`<path d="M6 1L2 5l4 4" fill="none" stroke="#27478f" stroke-width="2"/>`)}</button>
        <span class="btn thumb">${icon(10, 8, svg`<path d="M1.500 0v8M4.500 0v8M7.500 0v8" stroke="#8fabeb"/>`)}</span><span class="sp"></span>
        <button class="btn" aria-label="Scroll right">${icon(8, 10, svg`<path d="M2 1l4 4-4 4" fill="none" stroke="#27478f" stroke-width="2"/>`)}</button>
      </div>
      <div class="under bold">
        ${icon(15, 15, svg`<circle cx="7.500" cy="8" r="6.300" fill="#fff" stroke="#222" stroke-width="1.200"/><circle cx="7.500" cy="8" r="4.500" fill="none" stroke="#b22" stroke-dasharray="1 2"/><path d="M7.500 8L5 5M7.500 8l3-3" stroke="#b22"/><path d="M1 3l2-2M14 3l-2-2" stroke="#333" stroke-width="1.500"/>`)}
        ${icon(11, 14, svg`<path d="M2 4l9-1v10l-3 1-5-3z" fill="#999"/><text x="0" y="7" class="mos">m</text><circle cx="7" cy="9" r="2" fill="none" stroke="#111"/>`)}
        Under 30:00</div>
    </section>`;
  }

  private system() {
    return html`<section class="win system">
      <header class="bar">${orb()}<h2 class="grow">System</h2>${this.ctl(["corner"])}</header>
      <div class="blank"></div>
      <div class="tabs2 bold"><button class="on">Folder list</button><button>My ENPS</button></div>
      <nav class="tree"><a href="#rundown">
        ${icon(15, 15, svg`<rect y="0" width="15" height="5" fill="#3cae55"/><rect y="11" width="15" height="4" fill="#3cae55"/><rect y="4" width="15" height="7" fill="#e6f6e8"/><text x="0" y="10" class="mos">mos</text>`)}
        Mon Rundown [10/27/2011</a></nav>
    </section>`;
  }

  private story() {
    return html`<section class="win story">
      <header class="bar">${orb()}
        <button class="doc">another test [Mon Rundown [10/27/201</button>
        <span class="grow"></span><span class="tl">[TL 0:58]</span>
        ${this.ctl(["full", "side", "close"], true)}
      </header>
      <div class="info">${lens(15)}${layers()}${lock()}
        <p><a href="#r">Rundown</a>: Mon Rundown [10/27/2011 17:00]</p>
        <p><a href="#m">Modified</a>: Sytem demo &nbsp; 10/27/2011 17:56 <a href="#f">From</a>: System</p>
      </div>
      <div class="edit">
        <div class="media">
          <div class="mtop">
            <div class="card"><svg class="ic" width="101" height="75" viewBox="0 0 101 75" role="img" aria-label="Media card">
              <path d="M10 30l30 42q6 3 12 1l45-20-2 6-43 15-10-2z" fill="#ccc"/>
              <path d="M6 20L44 3q8-3 15 1 5 3 9 11l28 31q3 4-1 7L52 73q-5 2-8-2L22 42Z" fill="#1c3c96"/>
              <path d="M22 42l22 28q3 3 8 1l44-20" fill="none" stroke="#122a70" stroke-width="2"/>
              <path d="M28 43l43-21 20 23-44 22z" fill="#fff"/>
              <path d="M34 48l43-21M38 54l45-21M43 60l42-20" stroke="#aaa" stroke-width="1.500"/>
              <text transform="translate(28 33) rotate(-21)">Media</text></svg></div>
            <div class="inset">Football Bordeaux lyon</div>
          </div>
          <div class="mbar">
            <button aria-label="Stop">${icon(4, 4, svg`<rect width="3" height="3"/>`)}</button>
            <button aria-label="Play">${icon(8, 8, svg`<path d="M1 0l6 4-6 4 2-4z"/>`)}</button>
            <input type="range" min="0" max="100" value="0" aria-label="Position">
          </div>
          <div class="inset name">Football Bordeaux lyon</div>
        </div>
        <div class="editor">
          <div class="tools">${tools.map(([n, i]) => html`<button aria-label=${n}>${i}</button>`)}</div>
          <div class="text" contenteditable="true" spellcheck="false" role="textbox" aria-label="Story text">yet <u>qnother</u> test<mark>[&lt;mos&gt;Football Bordeaux lyon&lt;/mos&gt;]</mark></div>
          <div class="grip">${icon(22, 7, svg`<path d="M0 7L11 0l11 7z" fill="#d8d8fa"/>`)}</div>
        </div>
      </div>
    </section>`;
  }

  private music() {
    return html`<section class="win music">
      <header class="bar">${orb()}<span class="grow"></span>${this.ctl(["full", "side", "close"], true)}</header>
      <div class="launch">
        <button aria-label="Play">${icon(14, 20, svg`<path d="M3 3l10 9-10 8z" fill="#222"/><path d="M2 1l10 9-10 8z" fill="#fff"/>`)}</button>
        <button aria-label="Waveform">${icon(21, 15, svg`<rect width="21" height="15" fill="#000"/><path d="M1 7.500l3-2 3-1V3l2-1 2 2h3l1 1 1-1v2l3-1v2l1 .5-1 .5v2l-3-1v2l-1-1-1 1h-3l-2 2-2-1v-1.500l-3-1z" fill="#35e53b"/><path d="M1 7.500h18" stroke="#117a15"/>`)}</button>
        <button aria-label="Voice">${icon(22, 22, svg`<rect width="22" height="22" fill="#e52222"/><path d="M0 0h11L6 9l-2 5 3 1-2 7H0z" fill="#f59a22"/><path d="M12 0L7 7l-3 7 3 1-1 3 4 4" fill="none" stroke="#ffd9b0"/><path d="M11 6l5 3" stroke="#ffd9b0" stroke-width="2"/><circle cx="20" cy="14" r="2" fill="#fff"/>`)}</button>
      </div>
      <div class="cats">
        <nav class="catlist">${cats.map(([n, i]) => html`<button class=${n === this.category ? "on" : ""} @click=${() => (this.category = n)}>${i}${n}</button>`)}</nav>
        <div class="pager">
          <button aria-label="Previous">${icon(6, 8, svg`<path d="M5 0v8L0 4z" fill="#fff"/>`)}</button>
          <button aria-label="List">${icon(14, 13, svg`<rect x=".5" y=".5" width="13" height="12" rx="2" fill="#555" stroke="#222"/><path d="M3 4h8M3 6.500h8M3 9h8" stroke="#ddd"/>`)}</button>
          <button aria-label="Next">${icon(6, 8, svg`<path d="M1 0v8l5-4z" fill="#fff"/>`)}</button>
        </div>
        <time class="lcd">17:42:42</time>
      </div>
      <div class="body">
        <div class="side">
          <div class="kinds">${filters.map(([n, c, i]) => html`<button class=${c} aria-label=${n}>${i}</button>`)}</div>
          <form>${fields.map(([n, pick], k) => html`<div class="field"><label for="f${k}">${n}</label>
            ${pick ? html`<div class="pick"><select id="f${k}"><option></option></select><span>${this.arrow()}</span></div>` : html`<input id="f${k}">`}</div>`)}
          </form>
        </div>
        <div class="list">
          <div class="rows"><table>
            <colgroup><col style="width:41px"><col style="width:153px"><col style="width:217px"><col></colgroup>
            <thead><tr><th>Status</th><th>Author</th><th>Title</th><th>Duration</th></tr></thead>
            <tbody>
              <tr class="gap"><td></td><td></td><td></td><td></td></tr>
              ${tracks.map(([s, a, t, d], i) => html`<tr class=${i === this.selected ? "sel" : ""} @click=${() => (this.selected = i)}>
                <td class="st"><div>${[...s].map((c) => glyphs[c]())}</div></td><td>${a}</td><td>${t}</td><td>${d}</td></tr>`)}
              ${Array.from({ length: 12 }, () => html`<tr><td></td><td></td><td></td><td></td></tr>`)}
            </tbody>
          </table></div>
          <div class="hs">
            <button aria-label="Scroll left">${icon(5, 8, svg`<path d="M5 0v8L0 4z"/>`)}</button>
            <span class="thumb"></span><span></span>
            <button aria-label="Scroll right">${icon(5, 8, svg`<path d="M0 0v8l5-4z"/>`)}</button>
          </div>
        </div>
        <div class="deck">
          <div class="keys">${transport.map(([n, i]) => (i ? html`<button aria-label=${n}>${i}</button>` : html`<span></span>`))}</div>
          <p>11/16/2011</p>
        </div>
      </div>
    </section>`;
  }

  private footer() {
    return html`<footer class="foot">
      <div class="folders">${["Wires", "Sytem\ndemo", "ENPS\nNews", "System"].map((n) => html`<button><span class="flap">${orb()}</span><span class="folder bold">${n}</span></button>`)}</div>
      <div class="search">
        <div class="s1">${orb()}
          <button class="find" aria-label="Find">${lens(20)}</button>
          <input type="text" placeholder="Enter Search Here..." aria-label="Search">
          <button class="go bold"><u>G</u>o</button>
          <button class="more" aria-label="More">${icon(6, 10, svg`<path d="M0 4l3-4 3 4zM0 9l3-4 3 4z"/>`)}</button>
        </div>
        <div class="s2">
          <div class="all"><input type="checkbox" id="all" checked><label for="all">All Items</label><button aria-label="Expand">${icon(9, 5, svg`<path d="M0 5h9L4.500 0z"/>`)}</button></div>
          <div class="wires bold"><input type="checkbox" id="nw" checked><label for="nw">News wires</label></div>
          <div class="pick"><select aria-label="Wire"><option></option></select><span>${this.arrow("#aca899")}</span></div>
        </div>
      </div>
      <div class="desk">${desk.map(([n, i]) => html`<button aria-label=${n}>${orb()}${i}</button>`)}</div>
    </footer>`;
  }

  render() {
    return html`<div class="page">
      <header class="top">
        <div class="logo"><svg class="ic" width="126" height="38" viewBox="0 0 126 38" role="img" aria-label="AP ENPS">
          <text x="9" y="29" class="ap big">A</text><text x="31" y="31" class="ap">P</text><text x="53" y="28" class="enps">ENPS</text></svg></div>
        <div class="messages shadow bold"><dl><dt>Messages:</dt><dt>Urgent:</dt></dl><i></i></div>
        <time class="clock shadow bold">5:42:42</time>
      </header>
      <main class="main">
        ${this.rundown()}${this.system()}
        <div class="right">${this.story()}${this.music()}</div>
      </main>
      ${this.footer()}
    </div>`;
  }
}
